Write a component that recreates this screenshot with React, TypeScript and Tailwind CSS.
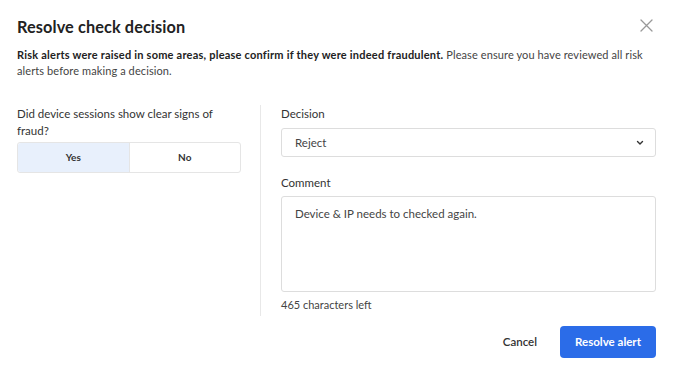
import React from "react";

export default function App() {
  return (
    <div className="w-[675px] h-[376px] bg-white text-[#333] font-['Lato',sans-serif] relative">
      <div className="px-[17px] pt-[17px]">
        <div className="flex items-start justify-between">
          <h1 className="text-[16.3px] font-bold text-[#222] leading-[20px] tracking-[0.1px]">Resolve check decision</h1>
          <button className="mr-[5px] mt-[2px] text-[#999]">
            <svg width="13" height="13" viewBox="0 0 13 13" fill="none" stroke="currentColor" strokeWidth="1.3" strokeLinecap="round">
              <path d="M1 1L12 12M12 1L1 12" />
            </svg>
          </button>
        </div>
        <p className="mt-[10px] text-[11px] leading-[16px] text-[#444] tracking-[0.1px]">
          <span className="font-bold text-[#222] tracking-[0.22px]">Risk alerts were raised in some areas, please confirm if they were indeed fraudulent.</span>{" "}
          Please ensure you have reviewed all risk alerts before making a decision.
        </p>
        <div className="mt-[26px] flex">
          <div className="w-[243px] pr-[20px]">
            <p className="text-[11.5px] leading-[17px] text-[#333]">Did device sessions show clear signs of fraud?</p>
            <div className="mt-[3px] flex h-[31px] w-[224px] rounded-[3px] border border-[#e5e5e5] text-[10px] font-bold text-[#333]">
              <button className="flex-1 bg-[#e8f0fc] rounded-l-[3px] border-r border-[#e5e5e5]">Yes</button>
              <button className="flex-1">No</button>
            </div>
          </div>
          <div className="border-l border-[#e8e8e8] pl-[20px] flex-1 pr-[2px]">
            <label className="block text-[11.5px] leading-[17px] text-[#333]">Decision</label>
            <div className="mt-[6px] h-[29px] rounded-[3px] border border-[#ddd] flex items-center justify-between pl-[13px] pr-[11px] text-[11.5px] text-[#444]">
              <span>Reject</span>
              <svg width="8" height="6" viewBox="0 0 8 6" fill="none" stroke="#333" strokeWidth="1.4" strokeLinecap="round" strokeLinejoin="round">
                <path d="M1.5 1.5L4 4L6.5 1.5" />
              </svg>
            </div>
            <label className="mt-[17px] block text-[11.5px] leading-[17px] text-[#333]">Comment</label>
            <div className="mt-[5px] h-[96px] rounded-[3px] border border-[#ddd] px-[13px] pt-[8px] text-[11.5px] text-[#444]">
              Device &amp; IP needs to checked again.
            </div>
            <p className="mt-[5px] pb-[3px] text-[11px] leading-[16px] text-[#444]">465 characters left</p>
          </div>
        </div>
        <div className="mt-[10px] flex justify-end items-center pr-[2px]">
          <button className="text-[11.5px] font-semibold text-[#333] mr-[23px]">Cancel</button>
          <button className="h-[32px] w-[96px] rounded-[4px] bg-[#2b6ce8] text-white text-[11.5px] font-bold">Resolve alert</button>
        </div>
      </div>
    </div>
  );
}
